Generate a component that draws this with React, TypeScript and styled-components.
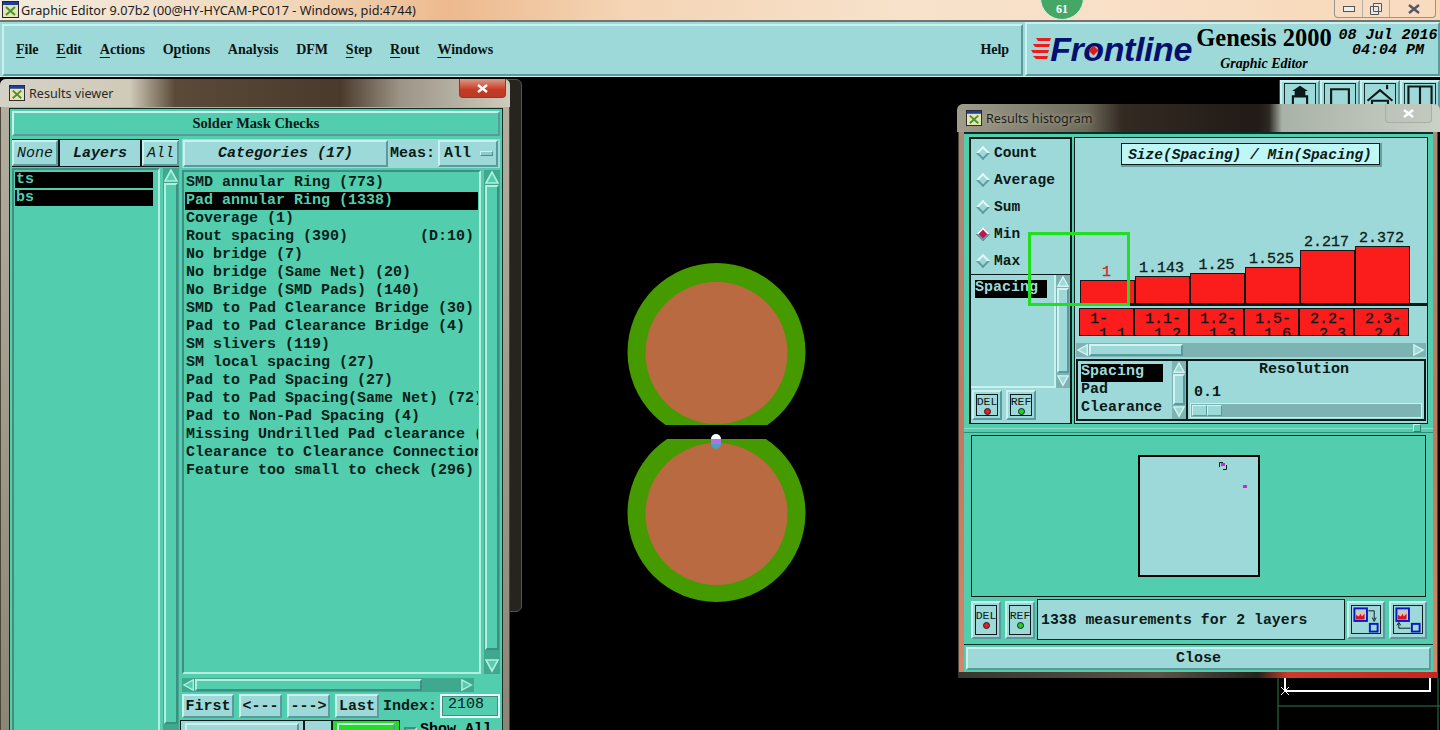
import styled, { createGlobalStyle } from 'styled-components';

const CATEGORIES = [
  'SMD annular Ring (773)',
  'Pad annular Ring (1338)',
  'Coverage (1)',
  'Rout spacing (390)        (D:10)',
  'No bridge (7)',
  'No bridge (Same Net) (20)',
  'No Bridge (SMD Pads) (140)',
  'SMD to Pad Clearance Bridge (30)',
  'Pad to Pad Clearance Bridge (4)',
  'SM slivers (119)',
  'SM local spacing (27)',
  'Pad to Pad Spacing (27)',
  'Pad to Pad Spacing(Same Net) (72)',
  'Pad to Non-Pad Spacing (4)',
  'Missing Undrilled Pad clearance (',
  'Clearance to Clearance Connection',
  'Feature too small to check (296)',
];

const MENUS = [
  ['File', 'F'],
  ['Edit', 'E'],
  ['Actions', 'A'],
  ['Options', 'p'],
  ['Analysis', ''],
  ['DFM', ''],
  ['Step', 'S'],
  ['Rout', 'R'],
  ['Windows', 'W'],
];

const BARS = [
  { value: '1', height: 23, range: '1-\n 1.1', min: true },
  { value: '1.143', height: 27, range: '1.1-\n 1.2' },
  { value: '1.25', height: 30, range: '1.2-\n 1.3' },
  { value: '1.525', height: 36, range: '1.5-\n 1.6' },
  { value: '2.217', height: 53, range: '2.2-\n 2.3' },
  { value: '2.372', height: 57, range: '2.3-\n 2.4' },
];

const MEASURES = ['Count', 'Average', 'Sum', 'Min', 'Max'];

const mono = `"Liberation Mono", "DejaVu Sans Mono", monospace`;
const serif = `"Liberation Serif", "Times New Roman", serif`;
const PANEL = '#9ed9d9';
const TEAL = '#52ceae';
const raised = `
  border: 2px solid;
  border-color: #c8f1ef #5b9a9c #5b9a9c #c8f1ef;
`;
const sunken = `
  border: 2px solid;
  border-color: #3f8d83 #b5eee0 #b5eee0 #3f8d83;
`;

const GlobalStyle = createGlobalStyle`
  * { box-sizing: border-box; }
  html, body { margin: 0; padding: 0; background: #000; overflow: hidden; }
  u { text-underline-offset: 3px; }
`;

const Desktop = styled.div`
  position: relative;
  width: 1440px;
  height: 730px;
  overflow: hidden;
  display: flex;
  flex-direction: column;
  background: #000;
`;

const TitleBar = styled.div`
  flex: none;
  height: 22px;
  display: flex;
  align-items: center;
  gap: 2px;
  padding: 0 0 1px 2px;
  position: relative;
  font: 12.7px "Noto Sans", sans-serif;
  color: #1c1c1c;
  background: linear-gradient(90deg, #f3ece0 0, #f1d6b8 300px, #eeb98e 450px, #f4d4b4 620px, #f7e2cb 900px, #f9dfc6 1150px, #f8d7b6 1440px);
  border-bottom: 2px solid #6e7572;
`;

const Badge = styled.div`
  position: absolute;
  left: 1040px;
  top: -24px;
  width: 44px;
  height: 44px;
  padding-top: 24px;
  border-radius: 50%;
  background: #45a765;
  border: 1px solid #d8efe0;
  color: #fff;
  text-align: center;
  font: bold 12px/16px ${serif};
`;

const Controls = styled.div`
  position: absolute;
  right: 4px;
  top: 0;
  width: 102px;
  height: 18px;
  display: grid;
  grid-template-columns: 28px 27px 47px;
  border: 1px solid #9a958c;
  border-top: 0;
  border-radius: 0 0 4px 4px;
  background: #f8e2cc66;
`;

const ControlCell = styled.div`
  display: flex;
  align-items: center;
  justify-content: center;
  border-right: 1px solid #b4aea4;
  &:last-child { border-right: 0; }
`;

const TopBar = styled.div`
  flex: none;
  height: 55px;
  display: flex;
  gap: 2px;
  padding-left: 2px;
  background: ${PANEL};
  box-shadow: inset 0 -1px 0 #c8f1ef;
`;

const MenuBox = styled.div`
  ${raised}
  width: 1024px;
  height: 52px;
  margin-top: 2px;
  display: flex;
  align-items: center;
  gap: 17.75px;
  padding: 0 11px 1px 12px;
  font: bold 14px ${serif};
  color: #0c1414;
`;

const HelpItem = styled.span`
  margin-left: auto;
  margin-right: 1px;
`;

const BrandBox = styled.div`
  ${raised}
  flex: 1;
  height: 54px;
  position: relative;
  display: flex;
  align-items: flex-start;
  padding-left: 4px;
`;

const Logo = styled.div`
  display: flex;
  align-items: center;
  height: 48px;
  margin-top: 1px;
`;

const LogoText = styled.span`
  font: italic bold 34px/1 "Liberation Sans", Arial, sans-serif;
  color: #05106e;
  letter-spacing: -0.4px;
  margin-left: -1px;
`;

const LogoO = styled.span`
  position: relative;
  &::after {
    content: '';
    position: absolute;
    left: 7px;
    top: 17px;
    width: 7px;
    height: 7px;
    background: #e8151c;
    transform: rotate(45deg);
  }
`;

const ProductBlock = styled.div`
  margin-left: 4px;
  width: 136px;
  color: #000;
  font-family: ${serif};
  text-align: center;
`;

const ProductName = styled.div`
  font-size: 24.5px;
  font-weight: bold;
  line-height: 28px;
  white-space: nowrap;
`;

const ProductSub = styled.div`
  margin-top: 4px;
  font-size: 14px;
  font-style: italic;
  font-weight: bold;
`;

const Clock = styled.div`
  margin-left: 6px;
  width: 100px;
  text-align: center;
  font: italic bold 15px/15px ${mono};
  white-space: pre;
  padding-top: 4px;
`;

const Canvas = styled.div`
  flex: 1;
  position: relative;
  background: #000;
`;

const PadDrawing = styled.svg`
  position: absolute;
  left: 0;
  top: 0;
`;

const ToolStrip = styled.div`
  position: absolute;
  left: 1279px;
  top: 3px;
  display: flex;
  padding: 0 0 0 1px;
  background: #0d5f58;
  height: 40px;
`;

const ToolButton = styled.div`
  ${raised}
  width: 40px;
  height: 40px;
  background: ${PANEL};
  display: flex;
  align-items: flex-start;
  justify-content: center;
  padding-top: 1px;
`;

const BackWindow = styled.div`
  position: absolute;
  left: 495px;
  top: 2px;
  width: 27px;
  height: 533px;
  background: #25241f;
  border: 1px solid #55534b;
  border-radius: 6px;
`;

const Frame = styled.div<{ $left: number; $top: number; $width: number; $height: number }>`
  position: absolute;
  left: ${(p) => p.$left}px;
  top: ${(p) => p.$top}px;
  width: ${(p) => p.$width}px;
  height: ${(p) => p.$height}px;
  display: flex;
  flex-direction: column;
  border-radius: 6px 6px 0 0;
  background: linear-gradient(180deg, #b6b0a0, #8a8472);
  padding: 0 7px;
  box-shadow: inset 0 0 0 1px #4a463c;
`;

const HistogramFrame = styled(Frame)`
  background: linear-gradient(180deg, #a78c7b 0, #c4775b 60%, #d78768 100%);
  padding: 0 5px 0 6px;
`;

const WindowTitle = styled.div<{ $dark?: boolean }>`
  flex: none;
  height: 28px;
  margin: 0 -7px;
  padding-left: 9px;
  display: flex;
  align-items: center;
  gap: 4px;
  border-radius: 6px 6px 0 0;
  font: 12.6px "Noto Sans", sans-serif;
  color: ${(p) => (p.$dark ? '#1d1d1a' : '#2a2a2a')};
  text-shadow: ${(p) => (p.$dark ? '0 0 5px #b9b4a4' : 'none')};
  background: ${(p) =>
    p.$dark
      ? 'linear-gradient(90deg, #a09d8c 0, #6d6a5a 130px, #332a22 165px, #211a16 300px, #2c2822 312px, #a9b2a6 325px, #c9d0c5 480px)'
      : 'linear-gradient(90deg, #d4d2c6 0, #d0cab8 130px, #5b4a38 175px, #4a3a2c 340px, #9c9486 400px, #cfcbbd 510px)'};
`;

const CloseX = styled.div<{ $red?: boolean }>`
  position: absolute;
  top: 0;
  right: ${(p) => (p.$red ? 4 : 6)}px;
  width: 47px;
  height: 19px;
  display: flex;
  align-items: center;
  justify-content: center;
  border: 1px solid ${(p) => (p.$red ? '#8e3a30' : '#a8aea4')};
  border-top: 0;
  border-radius: 0 0 4px 4px;
  background: ${(p) => (p.$red ? 'linear-gradient(180deg, #d99a86, #c93a22 60%, #b63a28)' : '#b9c1b666')};
`;

const ViewerBody = styled.div`
  flex: 1;
  display: flex;
  flex-direction: column;
  gap: 3px;
  padding: 2px;
  background: ${TEAL};
  border: 1px solid #0b2d28;
  margin: 1px 0 0 2px;
`;

const HeaderBar = styled.div`
  ${raised}
  flex: none;
  height: 25px;
  display: flex;
  align-items: center;
  justify-content: center;
  background: ${TEAL};
  font: bold 14.5px ${serif};
  color: #0b1a18;
`;

const Columns = styled.div`
  flex: 1;
  display: flex;
  gap: 3px;
  min-height: 0;
`;

const LayersColumn = styled.div`
  flex: none;
  width: 167px;
  display: flex;
  flex-direction: column;
  gap: 1px;
`;

const CategoriesColumn = styled.div`
  flex: 1;
  display: flex;
  flex-direction: column;
  min-width: 0;
`;

const ButtonRow = styled.div`
  flex: none;
  height: 28px;
  display: flex;
  align-items: stretch;
  gap: 2px;
  background: #0b1a18;
  padding: 1px 0;
`;

const MonoButton = styled.div<{ $width?: number; $italic?: boolean }>`
  ${raised}
  flex: ${(p) => (p.$width ? `0 0 ${p.$width}px` : '1')};
  display: flex;
  align-items: center;
  justify-content: center;
  background: ${PANEL};
  font: ${(p) => (p.$italic ? 'italic' : 'normal')} bold 15px ${mono};
  color: #0b1a18;
  white-space: pre;
`;

const ThinItalic = styled(MonoButton)`
  font-weight: normal;
`;

const FlatLabel = styled(MonoButton)`
  border-color: ${PANEL};
`;

const CategoryHead = styled.div`
  flex: none;
  height: 29px;
  display: flex;
  align-items: stretch;
  gap: 2px;
  background: ${PANEL};
  padding: 1px 2px 1px 1px;
  margin-bottom: 2px;
`;

const Caption = styled.span`
  align-self: center;
  font: bold 15px ${mono};
  color: #0b1a18;
  white-space: pre;
`;

const DropDown = styled(MonoButton)`
  justify-content: space-between;
  padding: 0 3px 0 4px;
  margin-left: auto;
`;

const DropMark = styled.i`
  width: 13px;
  height: 5px;
  background: #8fcaca;
  border: 1px solid;
  border-color: #c8f1ef #4e8a8c #4e8a8c #c8f1ef;
`;

const ListRow = styled.div`
  flex: 1;
  min-height: 0;
  display: flex;
  gap: 3px;
`;

const ItemList = styled.div<{ $pad?: number; $right?: number }>`
  ${sunken}
  flex: 1;
  min-width: 0;
  overflow: hidden;
  padding: ${(p) => p.$pad ?? 2}px ${(p) => p.$right ?? 1}px ${(p) => p.$pad ?? 2}px 1px;
  background: ${TEAL};
`;

const Item = styled.div<{ $on?: boolean }>`
  height: 18px;
  padding-left: 1px;
  font: bold 15px/18px ${mono};
  white-space: pre;
  overflow: hidden;
  color: ${(p) => (p.$on ? TEAL : '#082019')};
  background: ${(p) => (p.$on ? '#000' : 'transparent')};
`;

const LayerItem = styled(Item)`
  height: 16px;
  line-height: 16px;
  margin-bottom: 2px;
`;

const Track = styled.div<{ $vertical?: boolean; $light?: boolean; $size: number }>`
  flex: none;
  display: flex;
  flex-direction: ${(p) => (p.$vertical ? 'column' : 'row')};
  ${(p) => (p.$vertical ? `width: ${p.$size}px;` : `height: ${p.$size}px;`)}
  padding: 1px;
  background: ${(p) => (p.$light ? '#7db3b3' : '#3fa88e')};
`;

const Thumb = styled.div<{ $grow: number; $light?: boolean }>`
  flex: ${(p) => p.$grow} 1 0;
  background: ${(p) => (p.$light ? PANEL : TEAL)};
  border: 2px solid;
  border-color: ${(p) => (p.$light ? '#d2f3f1 #5b9a9c #5b9a9c #d2f3f1' : '#b5eee0 #3f8d83 #3f8d83 #b5eee0')};
`;

const ThumbRest = styled.div<{ $grow: number }>`
  flex: ${(p) => p.$grow} 1 0;
`;

const ArrowBox = styled.svg`
  flex: none;
  display: block;
`;

const HorizontalWrap = styled.div`
  flex: none;
  margin: 4px 26px 0 0;
`;

const NavRow = styled.div`
  flex: none;
  height: 24px;
  display: flex;
  align-items: stretch;
  gap: 5px;
  margin-top: 2px;
`;

const IndexField = styled.div`
  flex: none;
  width: 60px;
  margin-left: -2px;
  padding-left: 6px;
  border: 2px solid #e6fbf8;
  outline: 1px solid #3f8d83;
  outline-offset: -3px;
  font: 15px/17px ${mono};
  color: #082019;
  background: ${TEAL};
`;

const IndexCaption = styled(Caption)`
  margin-left: -1px;
`;

const ActionRow = styled.div`
  flex: none;
  height: 30px;
  display: flex;
  align-items: flex-start;
  margin-top: 2px;
  margin-left: -2px;
`;

const ActionCell = styled.div<{ $width: number; $fill: string }>`
  flex: 0 0 ${(p) => p.$width}px;
  height: 30px;
  border: 1px solid #0b1a18;
  background: ${(p) => p.$fill};
`;

const ActionInner = styled.div<{ $green?: boolean }>`
  ${raised}
  height: 30px;
  margin: 2px 4px 0;
  background: ${(p) => (p.$green ? '#1fe01f' : PANEL)};
`;

const CheckBox = styled.i`
  margin: 7px 3px 0 4px;
  width: 13px;
  height: 13px;
  ${sunken}
`;

const CheckLabel = styled.span`
  margin-top: 1px;
  font: bold 15px ${mono};
  white-space: pre;
`;

const HistBody = styled.div`
  flex: 1;
  display: flex;
  flex-direction: column;
  background: ${TEAL};
  border-top: 2px solid #0b2d28;
  min-height: 0;
`;

const TopSection = styled.div`
  flex: none;
  height: 290px;
  display: flex;
  gap: 2px;
  padding: 3px 5px 0;
  background: ${TEAL};
`;

const SideColumn = styled.div`
  flex: none;
  width: 103px;
  display: flex;
  flex-direction: column;
  background: ${PANEL};
  border: 2px solid #0b1a18;
  border-bottom-width: 1px;
`;

const RadioGroup = styled.div`
  flex: none;
  height: 136px;
  display: flex;
  flex-direction: column;
  padding-top: 0;
  border-bottom: 1px solid #0b1a18;
`;

const RadioRow = styled.div`
  flex: none;
  height: 27px;
  display: flex;
  align-items: center;
  gap: 6px;
  padding-left: 6px;
  font: bold 14.5px ${mono};
  color: #0b1a18;
`;

const Diamond = styled.i<{ $on?: boolean }>`
  width: 10px;
  height: 10px;
  transform: rotate(45deg);
  background: ${(p) => (p.$on ? '#c2124f' : PANEL)};
  border: 2px solid;
  border-color: #e4fbfa #5f9a9c #5f9a9c #e4fbfa;
  margin-left: 1px;
`;

const SpacingRow = styled.div`
  flex: none;
  height: 113px;
  display: flex;
`;

const PlainList = styled.div`
  flex: 1;
  padding: 5px 4px;
  border-right: 2px solid #c8f1ef;
  border-bottom: 2px solid #c8f1ef;
  min-width: 0;
`;

const PlainItem = styled.div<{ $on?: boolean; $width?: number }>`
  height: 18px;
  font: bold 15px/16px ${mono};
  white-space: pre;
  color: ${(p) => (p.$on ? PANEL : '#0b1a18')};
  background: ${(p) => (p.$on ? '#000' : 'transparent')};
  width: ${(p) => (p.$width ? `${p.$width}px` : 'auto')};
`;

const ButtonPair = styled.div`
  flex: 1;
  display: flex;
  gap: 4px;
  padding: 2px 1px;
`;

const SquareButton = styled.div<{ $width?: number; $height?: number }>`
  ${raised}
  flex: none;
  width: ${(p) => p.$width ?? 30}px;
  height: ${(p) => p.$height ?? 30}px;
  padding: 2px;
  background: ${PANEL};
`;

const MiniFace = styled.div`
  height: 100%;
  border: 1px solid #0b1a18;
  display: flex;
  flex-direction: column;
  align-items: center;
  justify-content: center;
  font: 11.5px/11px ${mono};
  color: #0b1a18;
`;

const Led = styled.i<{ $color: string }>`
  width: 7px;
  height: 7px;
  margin-top: 1px;
  border-radius: 50%;
  background: ${(p) => p.$color};
  border: 1px solid #123;
`;

const ChartPanel = styled.div`
  flex: 1;
  min-width: 0;
  display: flex;
  flex-direction: column;
  background: ${PANEL};
  border: 1px solid #0b1a18;
`;

const ChartHead = styled.div`
  flex: none;
  height: 107px;
  padding-top: 5px;
  display: flex;
  justify-content: center;
`;

const ChartTitle = styled.div`
  width: 259px;
  height: 22px;
  margin-right: 2px;
  text-align: center;
  background: #bff6f6;
  border: 1px solid #0b1a18;
  box-shadow: 1px 1px 0 1px #6a9fa0;
  font: italic bold 14.5px/22px ${mono};
  color: #0b1a18;
  white-space: pre;
`;

const BarRow = styled.div`
  flex: none;
  height: 61px;
  display: flex;
  align-items: flex-end;
  padding-left: 4px;
  border-bottom: 3px solid #0b1a18;
`;

const BarColumn = styled.div`
  flex: 0 0 55px;
  display: flex;
  flex-direction: column;
  align-items: center;
`;

const BarValue = styled.span<{ $min?: boolean }>`
  font: 15px/15px ${mono};
  -webkit-text-stroke: 0.3px currentColor;
  color: ${(p) => (p.$min ? '#c82828' : '#0b1a18')};
  white-space: pre;
`;

const Bar = styled.div<{ $height: number }>`
  width: 100%;
  height: ${(p) => p.$height}px;
  background: #fb1c1c;
  border: 1px solid #0b1a18;
  border-bottom: 0;
  margin-right: -1px;
`;

const RangeRow = styled.div`
  flex: none;
  display: flex;
  padding-left: 4px;
  margin-top: 2px;
`;

const RangeCell = styled.div`
  flex: 0 0 55px;
  height: 28px;
  padding: 3px 0 0 10px;
  overflow: hidden;
  background: #fb1c1c;
  border: 1px solid #0b1a18;
  font: 15px/15px ${mono};
  -webkit-text-stroke: 0.3px currentColor;
  white-space: pre;
  color: #0b1a18;
`;

const ChartScroll = styled.div`
  flex: none;
  margin: 7px 1px 0;
`;

const LowerRow = styled.div`
  flex: 1;
  display: flex;
  margin: 2px 1px;
  border: 2px solid #0b1a18;
  min-height: 0;
`;

const SubList = styled.div`
  flex: none;
  width: 94px;
  padding: 3px 0 0 3px;
`;

const ResolutionBox = styled.div`
  flex: 1;
  border-left: 2px solid #0b1a18;
  display: flex;
  flex-direction: column;
  font: bold 15px/18px ${mono};
  color: #0b1a18;
  padding: 0 2px;
`;

const ResolutionTitle = styled.div`
  text-align: center;
  padding-right: 4px;
`;

const ResolutionValue = styled.div`
  margin: 5px 0 0 4px;
`;

const Slider = styled.div`
  height: 15px;
  margin-top: 1px;
  padding: 1px;
  display: flex;
  background: #7db3b3;
  border: 1px solid #c8f1ef;
`;

const SliderThumb = styled.div`
  width: 15px;
  background: ${PANEL};
  border: 1px solid;
  border-color: #d2f3f1 #5b9a9c #5b9a9c #d2f3f1;
`;

const SashRow = styled.div`
  flex: none;
  height: 9px;
  position: relative;
  border-bottom: 1px solid #2a8f7a;
  background: linear-gradient(180deg, ${TEAL} 0 4px, #8adfc8 4px 5px, ${TEAL} 5px);
`;

const SashGrip = styled.i`
  position: absolute;
  right: 12px;
  top: 0;
  width: 8px;
  height: 8px;
  background: ${TEAL};
  border: 1px solid;
  border-color: #c8f1ef #2f7f70 #2f7f70 #c8f1ef;
`;

const PreviewPanel = styled.div`
  flex: none;
  height: 162px;
  margin: 2px 7px 0;
  display: flex;
  align-items: center;
  justify-content: center;
  border: 1px solid #0b1a18;
  background: ${TEAL};
`;

const PreviewBox = styled.div`
  position: relative;
  width: 122px;
  height: 122px;
  background: ${PANEL};
  border: 2px solid #000;
`;

const Marker = styled.i<{ $x: number; $y: number }>`
  position: absolute;
  left: ${(p) => p.$x}px;
  top: ${(p) => p.$y}px;
  width: 4px;
  height: 3px;
  background: #d81fe0;
`;

const MarkerBracket = styled.svg`
  position: absolute;
  left: 79px;
  top: 5px;
`;

const FooterRow = styled.div`
  flex: none;
  height: 41px;
  display: flex;
  align-items: center;
  gap: 4px;
  padding: 0 6px 0 7px;
  margin-top: 2px;
`;

const FooterMessage = styled.div`
  flex: 1;
  height: 41px;
  margin: 0 -2px;
  display: flex;
  align-items: center;
  padding-left: 3px;
  border: 1px solid #0b1a18;
  background: ${PANEL};
  font: bold 14.8px ${mono};
  color: #0b1a18;
  white-space: pre;
`;

const CloseRow = styled.div`
  flex: none;
  height: 28px;
  margin-top: 4px;
  padding: 2px 2px;
  background: ${TEAL};
  border-top: 1px solid #0b2d28;
`;

const CloseButton = styled(MonoButton)`
  height: 23px;
`;

const FrameBottom = styled.div`
  flex: none;
  height: 6px;
  margin: 0 -5px 0 -6px;
  background: linear-gradient(90deg, #3a342c 0, #5d5243 200px, #26211c 300px, #cf3a2a 330px, #c5261e 470px);
`;

const Annotation = styled.div`
  position: absolute;
  left: 1028px;
  top: 232px;
  width: 102px;
  height: 74px;
  border: 3px solid #1fe01f;
`;

function Arrow({ dir, light, size }: { dir: 'up' | 'down' | 'left' | 'right'; light?: boolean; size: number }) {
  const points = {
    up: '1,12 7,1 13,12',
    down: '1,1 7,12 13,1',
    left: '12,1 1,7 12,13',
    right: '1,1 12,7 1,13',
  }[dir];
  return (
    <ArrowBox width={size} height={size} viewBox="0 0 14 14">
      <polygon
        points={points}
        fill={light ? PANEL : TEAL}
        stroke={light ? '#d2f3f1' : '#b5eee0'}
        strokeWidth="1.6"
      />
    </ArrowBox>
  );
}

function ScrollBar({
  vertical,
  light,
  thumb,
  size = 16,
}: {
  vertical?: boolean;
  light?: boolean;
  thumb: number;
  size?: number;
}) {
  const arrow = size - 2;
  return (
    <Track $vertical={vertical} $light={light} $size={size}>
      <Arrow dir={vertical ? 'up' : 'left'} light={light} size={arrow} />
      <Thumb $grow={thumb} $light={light} />
      <ThumbRest $grow={1 - thumb} />
      <Arrow dir={vertical ? 'down' : 'right'} light={light} size={arrow} />
    </Track>
  );
}

function LedButton({ label, color, height }: { label: string; color: string; height?: number }) {
  return (
    <SquareButton $height={height}>
      <MiniFace>
        {label}
        <Led $color={color} />
      </MiniFace>
    </SquareButton>
  );
}

function AppGlyph({ size }: { size: number }) {
  return (
    <svg width={size} height={size} viewBox="0 0 17 17">
      <rect x="0.5" y="0.5" width="16" height="16" fill="#e8e4b0" stroke="#223" />
      <rect x="1" y="1" width="15" height="3" fill="#1f3f9f" />
      <path d="M4 6l9 8M13 6l-9 8" stroke="#4a9030" strokeWidth="2" />
    </svg>
  );
}

function CloseGlyph() {
  return (
    <svg width="11" height="9">
      <path d="M1 1l9 7M10 1L1 8" stroke="#fff" strokeWidth="2.4" />
    </svg>
  );
}

function TransferIcon({ flipped }: { flipped?: boolean }) {
  return (
    <svg width="30" height="29" viewBox="0 0 31 30">
      <rect x="0.5" y="0.5" width="30" height="29" fill="none" stroke="#0b1a18" />
      <rect x="3.5" y="3.5" width="13" height="13" fill="#c9c9c0" stroke="#0a18c8" strokeWidth="2" />
      <path d="M5 15v-5l3 2 2-3 1 3 3-3v6z" fill="#e01020" />
      <rect x="19.5" y="19.5" width="8" height="8" fill="none" stroke="#0a18c8" strokeWidth="2" />
      {flipped ? (
        <path d="M18 24H6V19M4 21l2-3 2 3" fill="none" stroke="#0b1a18" />
      ) : (
        <path d="M18 6h6v9M22 13l2 4 2-4" fill="none" stroke="#0b1a18" />
      )}
    </svg>
  );
}

function ToolIcon({ index }: { index: number }) {
  return (
    <svg width="32" height="32" viewBox="0 0 36 36" fill="none" stroke="#0b1a18" strokeWidth="2.4">
      <rect x="0.5" y="0.5" width="35" height="35" strokeWidth="1" />
      {index === 0 && (
        <>
          <path d="M10 30V15h16v15" />
          <path d="M12 15V9H9l9-6 9 6h-3v6z" fill="#0b1a18" stroke="none" />
        </>
      )}
      {index === 1 && <path d="M8 7h20v22H8z" />}
      {index === 2 && (
        <>
          <path d="M4 20L18 8l14 12M8 20h20M9 20v12h18V20" />
          <path d="M26 7V2" />
        </>
      )}
      {index === 3 && (
        <>
          <path d="M5 4h26v28H5zM18 4v28" />
          <path d="M23 27l2 2M25 27l-2 2M28 27l2 2M30 27l-2 2" strokeWidth="1" />
        </>
      )}
    </svg>
  );
}

export default function App() {
  return (
    <Desktop>
      <GlobalStyle />
      <TitleBar>
        <AppGlyph size={17} />
        Graphic Editor 9.07b2 (00@HY-HYCAM-PC017 - Windows, pid:4744)
        <Badge>61</Badge>
        <Controls>
          <ControlCell>
            <svg width="12" height="6">
              <rect x="0.5" y="0.5" width="11" height="5" fill="#eee" stroke="#555" />
            </svg>
          </ControlCell>
          <ControlCell>
            <svg width="12" height="12">
              <path d="M3.5.5h8v8h-8zM.5 3.5h8v8h-8z" fill="#e8e8e8" stroke="#555" />
            </svg>
          </ControlCell>
          <ControlCell>
            <svg width="12" height="10">
              <path d="M1 1l10 8M11 1L1 9" stroke="#556" strokeWidth="2.4" />
            </svg>
          </ControlCell>
        </Controls>
      </TitleBar>

      <TopBar>
        <MenuBox>
          {MENUS.map(([name, mark]) => {
            const at = mark ? name.indexOf(mark) : -1;
            return (
              <span key={name}>
                {at < 0 ? (
                  name
                ) : (
                  <>
                    {name.slice(0, at)}
                    <u>{mark}</u>
                    {name.slice(at + 1)}
                  </>
                )}
              </span>
            );
          })}
          <HelpItem>Help</HelpItem>
        </MenuBox>
        <BrandBox>
          <Logo>
            <svg width="20" height="24" viewBox="0 0 20 24">
              <path d="M5 1h15l-1 3H7zM2 7h17l-1 3H4zM0 13h18l-1 3H2zM2 19h15l-1 3H5z" fill="#ef1b1b" />
            </svg>
            <LogoText>
              Fr<LogoO>o</LogoO>ntline
            </LogoText>
          </Logo>
          <ProductBlock>
            <ProductName>Genesis 2000</ProductName>
            <ProductSub>Graphic Editor</ProductSub>
          </ProductBlock>
          <Clock>{'08 Jul 2016\n04:04 PM'}</Clock>
        </BrandBox>
      </TopBar>

      <Canvas>
        <PadDrawing width="1440" height="653" viewBox="0 77 1440 653">
          <defs>
            <clipPath id="upper">
              <rect x="600" y="250" width="240" height="175" />
            </clipPath>
            <clipPath id="lower">
              <rect x="600" y="439" width="240" height="175" />
            </clipPath>
          </defs>
          <g clipPath="url(#upper)">
            <circle cx="716.5" cy="352" r="89" fill="#459a00" />
            <circle cx="716.5" cy="353" r="71" fill="#b96a40" />
          </g>
          <g clipPath="url(#lower)">
            <circle cx="716.5" cy="513" r="89" fill="#459a00" />
            <circle cx="716.5" cy="514" r="71" fill="#b96a40" />
          </g>
          <path d="M711 439a5 5 0 0 1 10 0z" fill="#fff" />
          <rect x="711" y="439" width="10" height="5" fill="#b070f0" />
          <path d="M711 444h10a5 5 0 0 1-10 0z" fill="#4aa0c0" />
          <path d="M1285 678v13h145v-13" fill="none" stroke="#fff" strokeWidth="2" />
          <path d="M1281 687l8 8M1289 687l-8 8" stroke="#fff" />
          <path d="M1278 678v52M1278 706h162M1438 678v52" fill="none" stroke="#2c7a4a" />
        </PadDrawing>

        <ToolStrip>
          {[0, 1, 2, 3].map((index) => (
            <ToolButton key={index}>
              <ToolIcon index={index} />
            </ToolButton>
          ))}
        </ToolStrip>

        <BackWindow />

        <Frame $left={0} $top={2} $width={510} $height={674}>
          <WindowTitle>
            <AppGlyph size={16} />
            Results viewer
            <CloseX $red>
              <CloseGlyph />
            </CloseX>
          </WindowTitle>
          <ViewerBody>
            <HeaderBar>Solder Mask Checks</HeaderBar>
            <Columns>
              <LayersColumn>
                <ButtonRow>
                  <ThinItalic $width={46} $italic>
                    None
                  </ThinItalic>
                  <FlatLabel $italic>Layers</FlatLabel>
                  <ThinItalic $width={37} $italic>
                    All
                  </ThinItalic>
                </ButtonRow>
                <ListRow>
                  <ItemList $pad={2} $right={5}>
                    <LayerItem $on>ts</LayerItem>
                    <LayerItem $on>bs</LayerItem>
                  </ItemList>
                  <ScrollBar vertical thumb={0.98} />
                </ListRow>
              </LayersColumn>
              <CategoriesColumn>
                <CategoryHead>
                  <MonoButton $width={205} $italic>
                    Categories (17)
                  </MonoButton>
                  <Caption>Meas:</Caption>
                  <DropDown $width={60}>
                    All
                    <DropMark />
                  </DropDown>
                </CategoryHead>
                <ListRow>
                  <ItemList>
                    {CATEGORIES.map((name, i) => (
                      <Item key={name} $on={i === 1}>
                        {name}
                      </Item>
                    ))}
                  </ItemList>
                  <ScrollBar vertical thumb={0.98} />
                </ListRow>
                <HorizontalWrap>
                  <ScrollBar thumb={0.85} size={14} />
                </HorizontalWrap>
                <NavRow>
                  <MonoButton $width={52}>First</MonoButton>
                  <MonoButton $width={43}>{'<---'}</MonoButton>
                  <MonoButton $width={43}>{'--->'}</MonoButton>
                  <MonoButton $width={44}>Last</MonoButton>
                  <IndexCaption>Index:</IndexCaption>
                  <IndexField>2108</IndexField>
                </NavRow>
                <ActionRow>
                  <ActionCell $width={124} $fill={PANEL}>
                    <ActionInner />
                  </ActionCell>
                  <ActionCell $width={28} $fill={PANEL} />
                  <ActionCell $width={68} $fill="#1fe01f">
                    <ActionInner $green />
                  </ActionCell>
                  <CheckBox />
                  <CheckLabel>Show All</CheckLabel>
                </ActionRow>
              </CategoriesColumn>
            </Columns>
          </ViewerBody>
        </Frame>

        <HistogramFrame $left={958} $top={27} $width={480} $height={574}>
          <WindowTitle $dark>
            <AppGlyph size={16} />
            Results histogram
            <CloseX>
              <CloseGlyph />
            </CloseX>
          </WindowTitle>
          <HistBody>
            <TopSection>
              <SideColumn>
                <RadioGroup>
                  {MEASURES.map((name) => (
                    <RadioRow key={name}>
                      <Diamond $on={name === 'Min'} />
                      {name}
                    </RadioRow>
                  ))}
                </RadioGroup>
                <SpacingRow>
                  <PlainList>
                    <PlainItem $on $width={72}>
                      Spacing
                    </PlainItem>
                  </PlainList>
                  <ScrollBar vertical light thumb={0.98} size={14} />
                </SpacingRow>
                <ButtonPair>
                  <LedButton label="DEL" color="#f01c1c" />
                  <LedButton label="REF" color="#22d022" />
                </ButtonPair>
              </SideColumn>
              <ChartPanel>
                <ChartHead>
                  <ChartTitle>Size(Spacing) / Min(Spacing)</ChartTitle>
                </ChartHead>
                <BarRow>
                  {BARS.map((bar) => (
                    <BarColumn key={bar.value}>
                      <BarValue $min={bar.min}>{bar.value}</BarValue>
                      <Bar $height={bar.height} />
                    </BarColumn>
                  ))}
                </BarRow>
                <RangeRow>
                  {BARS.map((bar) => (
                    <RangeCell key={bar.range}>{bar.range}</RangeCell>
                  ))}
                </RangeRow>
                <ChartScroll>
                  <ScrollBar light thumb={0.28} size={14} />
                </ChartScroll>
                <LowerRow>
                  <SubList>
                    <PlainItem $on $width={82}>
                      Spacing
                    </PlainItem>
                    <PlainItem>Pad</PlainItem>
                    <PlainItem>Clearance</PlainItem>
                  </SubList>
                  <ScrollBar vertical light thumb={0.98} size={14} />
                  <ResolutionBox>
                    <ResolutionTitle>Resolution</ResolutionTitle>
                    <ResolutionValue>0.1</ResolutionValue>
                    <Slider>
                      <SliderThumb />
                      <SliderThumb />
                    </Slider>
                  </ResolutionBox>
                </LowerRow>
              </ChartPanel>
            </TopSection>
            <SashRow>
              <SashGrip />
            </SashRow>
            <PreviewPanel>
              <PreviewBox>
                <MarkerBracket width="8" height="8" viewBox="0 0 8 8">
                  <path d="M0.5 5V0.5H4M7.5 3v4.5H4" fill="none" stroke="#0b1a18" />
                </MarkerBracket>
                <Marker $x={81} $y={6} />
                <Marker $x={103} $y={28} />
              </PreviewBox>
            </PreviewPanel>
            <FooterRow>
              <LedButton label="DEL" color="#f01c1c" height={38} />
              <LedButton label="REF" color="#22d022" height={38} />
              <FooterMessage>1338 measurements for 2 layers</FooterMessage>
              <SquareButton $width={38} $height={38}>
                <TransferIcon />
              </SquareButton>
              <SquareButton $width={38} $height={38}>
                <TransferIcon flipped />
              </SquareButton>
            </FooterRow>
            <CloseRow>
              <CloseButton>Close</CloseButton>
            </CloseRow>
          </HistBody>
          <FrameBottom />
        </HistogramFrame>
      </Canvas>
      <Annotation />
    </Desktop>
  );
}
